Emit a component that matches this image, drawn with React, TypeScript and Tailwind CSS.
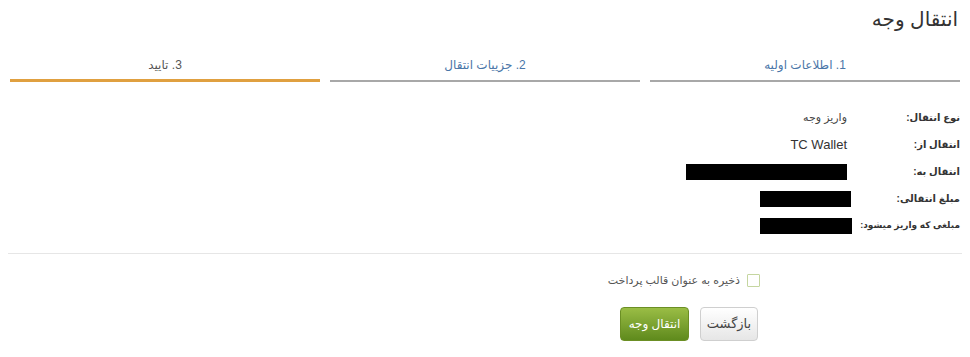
import React from "react";

const font = { fontFamily: '"Liberation Sans", "DejaVu Sans", sans-serif' };

interface Row {
  label: string;
  value?: string;
  redact?: string;
  big?: boolean;
  small?: boolean;
}

const rows: Row[] = [
  { label: "نوع انتقال:", value: "واریز وجه" },
  { label: "انتقال از:", value: "TC Wallet", big: true },
  { label: "انتقال به:", redact: "w-[161px]" },
  { label: "مبلغ انتقالی:", redact: "w-[91px] -mr-[4px]" },
  { label: "مبلغی که واریز میشود:", redact: "w-[92px] -mr-[5px]", small: true },
];

const tabs = [
  { title: "1. اطلاعات اولیه", active: false },
  { title: "2. جزییات انتقال", active: false },
  { title: "3. تایید", active: true },
];

export default function App() {
  return (
    <div dir="rtl" className="w-[970px] h-[357px] bg-white overflow-hidden px-[10px]" style={font}>
      <h1 className="text-[20px] leading-[24px] text-[#333] pt-[7px] pr-[2px] font-normal">انتقال وجه</h1>

      {/* مراحل */}
      <div className="grid grid-cols-3 gap-[10px] mt-[26px]">
        {tabs.map((t) => (
          <div
            key={t.title}
            className={
              t.active
                ? "text-center text-[12px] leading-[16px] pb-[6px] border-b-[3px] border-[#e0a040] text-[#555]"
                : "text-center text-[12px] leading-[16px] pb-[6px] border-b-[2px] border-[#a8a8a8] text-[#4a76a8]"
            }
          >
            {t.title}
          </div>
        ))}
      </div>

      {/* جزئیات */}
      <div className="mt-[27px] flex flex-col gap-[10px]">
        {rows.map((r) => (
          <div key={r.label} className="flex items-center h-[17px]">
            <div
              className={
                r.small
                  ? "w-[113px] shrink-0 text-[9px] font-bold text-[#333] whitespace-nowrap"
                  : "w-[113px] shrink-0 text-[10px] font-bold text-[#333] whitespace-nowrap"
              }
            >
              {r.label}
            </div>
            <div className="flex">
              {r.value && (
                <span className={r.big ? "text-[13px] text-[#333]" : "text-[11px] text-[#444]"}>{r.value}</span>
              )}
              {r.redact && <div className={`${r.redact} h-[16px] bg-black`} />}
            </div>
          </div>
        ))}
      </div>

      <div className="mt-[19px] h-px bg-[#e6e6e6] mx-[-2px]" />

      <label className="flex items-center gap-[7px] mt-[18px] pr-[200px]">
        <span className="w-[13px] h-[13px] border border-[#c5d6a0] bg-white rounded-[1px]" />
        <span className="text-[11px] text-[#555]">ذخیره به عنوان قالب پرداخت</span>
      </label>

      <div className="flex gap-[11px] mt-[18px] pr-[202px]">
        <button className="w-[58px] h-[34px] rounded-[4px] border border-[#cfcfcf] bg-gradient-to-b from-white to-[#e6e6e6] text-[13px] text-[#444]">
          بازگشت
        </button>
        <button className="w-[69px] h-[34px] rounded-[4px] border border-[#6b8f24] bg-gradient-to-b from-[#9abd45] to-[#5f8a1c] text-[12px] text-white">
          انتقال وجه
        </button>
      </div>
    </div>
  );
}
